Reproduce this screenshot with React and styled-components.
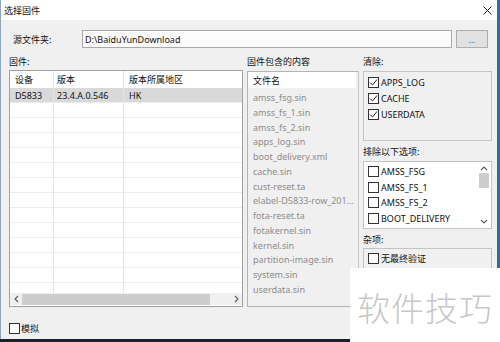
import React from 'react';
import styled, { createGlobalStyle } from 'styled-components';

const GlobalStyle = createGlobalStyle`
  html, body { margin: 0; padding: 0; }
  body {
    width: 500px; height: 342px; overflow: hidden;
    font-family: "Noto Sans", "Noto Sans CJK SC", sans-serif;
  }
`;

const Screen = styled.div`
  position: relative;
  width: 500px;
  height: 342px;
  background: #2f6ca8;
  display: flex;
  flex-direction: column;
  overflow: hidden;
  font-size: 9px;
  color: #111;
`;

const Window = styled.div`
  width: 497px;
  height: 339px;
  box-sizing: border-box;
  border-left: 1px solid #8fa6bf;
  background: #f0f0f0;
  display: flex;
  flex-direction: column;
`;

const Taskbar = styled.div`
  height: 3px;
  background: #18222f;
`;

const TitleBar = styled.div`
  height: 20px;
  background: #fff;
  display: flex;
  align-items: center;
  justify-content: space-between;
  padding: 0 5px 0 3px;
  font-family: "Noto Sans CJK SC", sans-serif;
`;

const Body = styled.div`
  display: flex;
  flex-direction: column;
  padding: 0 5px 0 8px;
`;

const SourceRow = styled.div`
  display: flex;
  align-items: center;
  margin-top: 10px;
  height: 18px;
`;

const SourceLabel = styled.div`
  width: 69px;
  padding-left: 4px;
  font-family: "Noto Sans CJK SC", sans-serif;
`;

const PathInput = styled.div`
  width: 370px;
  height: 18px;
  box-sizing: border-box;
  border: 1px solid #a9a9a9;
  background: #fbfbfb;
  display: flex;
  align-items: center;
  padding-left: 2px;
`;

const BrowseButton = styled.div`
  margin-left: 4px;
  width: 32px;
  height: 18px;
  box-sizing: border-box;
  border: 1px solid #adadad;
  background: #e1e1e1;
  display: flex;
  align-items: center;
  justify-content: center;
  font-size: 8px;
  color: #444;
`;

const Columns = styled.div`
  display: grid;
  grid-template-columns: 234px 112px 129px;
  column-gap: 4px;
  margin-top: 6px;
`;

const Column = styled.div`
  display: flex;
  flex-direction: column;
`;

const GroupLabel = styled.div`
  height: ${p => p.$h || 16}px;
  line-height: ${p => p.$lh || 16}px;
  font-family: "Noto Sans CJK SC", sans-serif;
  white-space: nowrap;
`;

const TableBox = styled.div`
  height: 237px;
  box-sizing: border-box;
  border: 1px solid #a0a0a0;
  background: #fff;
  display: flex;
  flex-direction: column;
`;

const TableBody = styled.div`
  flex: 1;
  overflow: hidden;
`;

const TRow = styled.div`
  display: grid;
  grid-template-columns: 44px 70px 1fr;
  height: ${p => (p.$head ? 17 : 15)}px;
  box-sizing: border-box;
  background: ${p => (p.$selected ? '#d9d9d9' : '#fff')};
  border-bottom: ${p => (p.$head ? 'none' : '1px solid #ececec')};
`;

const TCell = styled.div`
  border-right: 1px solid #e6e6e6;
  padding-left: ${p => p.$pl || 4}px;
  display: flex;
  align-items: center;
  white-space: nowrap;
  overflow: hidden;
  font-family: "Noto Sans", "Noto Sans CJK SC", sans-serif;
  &:last-child { border-right: none; }
`;

const HScroll = styled.div`
  height: 12px;
  display: flex;
  align-items: center;
  background: #f0f0f0;
  margin-bottom: 1px;
`;

const ScrollArrow = styled.div`
  width: ${p => p.$w || 12}px;
  height: ${p => p.$h || 12}px;
  display: flex;
  align-items: center;
  justify-content: center;
  flex-shrink: 0;
`;

const HThumb = styled.div`
  flex: 1;
  height: 11px;
  background: #cdcdcd;
  margin: 0 20px 0 0;
`;

const BottomRow = styled.div`
  display: flex;
  align-items: center;
  gap: 1px;
  margin-top: 15px;
  height: 12px;
  font-family: "Noto Sans CJK SC", sans-serif;
`;

const ListBox = styled.div`
  height: 236px;
  box-sizing: border-box;
  border: 1px solid #b4b4b4;
  border-right-color: #c8c8c8;
  background: #f0f0f0;
  overflow: hidden;
`;

const ListHead = styled.div`
  height: 16px;
  background: #fff;
  display: flex;
  align-items: center;
  padding-left: 5px;
  font-family: "Noto Sans CJK SC", sans-serif;
  margin-right: 2px;
`;

const ListItems = styled.div`
  padding-top: 3px;
`;

const ListItem = styled.div`
  height: 14.75px;
  line-height: 14.75px;
  padding-left: 5px;
  color: #8c8c8c;
  white-space: nowrap;
`;

const OptionBox = styled.div`
  height: ${p => p.$h}px;
  box-sizing: border-box;
  border: 1px solid #c4c4c4;
  background: ${p => (p.$white ? '#fff' : '#f0f0f0')};
  padding: ${p => p.$pt || 2}px 0 0 4px;
  display: flex;
  position: relative;
`;

const OptionList = styled.div`
  flex: 1;
  display: flex;
  flex-direction: column;
`;

const OptionRow = styled.div`
  height: ${p => p.$h || 16}px;
  display: flex;
  align-items: center;
  gap: 2px;
  white-space: nowrap;
  font-family: "Noto Sans", "Noto Sans CJK SC", sans-serif;
`;

const Box = styled.span`
  width: 11px;
  height: 11px;
  box-sizing: border-box;
  border: 1px solid #333;
  background: #fff;
  display: inline-flex;
  align-items: center;
  justify-content: center;
  flex-shrink: 0;
`;

const VScroll = styled.div`
  width: 11px;
  margin: -1px 2px 2px 0;
  display: flex;
  flex-direction: column;
  align-items: center;
`;

const VThumb = styled.div`
  width: 10px;
  height: 15px;
  background: #cdcdcd;
`;

const VSpacer = styled.div`
  flex: 1;
`;

const Watermark = styled.div`
  position: absolute;
  right: 0;
  bottom: 0;
  width: 150px;
  height: 74px;
  background: #fff;
  display: flex;
  align-items: center;
  justify-content: center;
  padding-top: 4px;
  box-sizing: border-box;
  font-family: "Noto Sans CJK SC", sans-serif;
  font-size: 33px;
  font-weight: 300;
  color: #c8c8c8;
  letter-spacing: 1px;
`;

const Check = ({ checked }) => (
  <Box>
    {checked && (
      <svg width="9" height="9" viewBox="0 0 9 9">
        <polyline points="1,4.5 3.5,7 8,1.5" fill="none" stroke="#222" strokeWidth="1" />
      </svg>
    )}
  </Box>
);

const Chevron = ({ dir }) => {
  const pts = {
    left: '4,1 1,4 4,7',
    right: '1,1 4,4 1,7',
    up: '1,4 4,1 7,4',
    down: '1,1 4,4 7,1',
  }[dir];
  const horiz = dir === 'left' || dir === 'right';
  return (
    <svg width={horiz ? 5 : 8} height={horiz ? 8 : 5} viewBox={horiz ? '0 0 5 8' : '0 0 8 5'}>
      <polyline points={pts} fill="none" stroke="#606060" strokeWidth="1.2" />
    </svg>
  );
};

const files = [
  'amss_fsg.sin', 'amss_fs_1.sin', 'amss_fs_2.sin', 'apps_log.sin', 'boot_delivery.xml',
  'cache.sin', 'cust-reset.ta', 'elabel-D5833-row_201...', 'fota-reset.ta', 'fotakernel.sin',
  'kernel.sin', 'partition-image.sin', 'system.sin', 'userdata.sin',
];

const emptyRows = Array.from({ length: 13 });

export default function App() {
  return (
    <>
      <GlobalStyle />
      <Screen>
        <Window>
          <TitleBar>
            <span>选择固件</span>
            <svg width="9" height="9" viewBox="0 0 9 9">
              <path d="M0.5 0.5 L8.5 8.5 M8.5 0.5 L0.5 8.5" stroke="#222" strokeWidth="1" />
            </svg>
          </TitleBar>
          <Body>
            <SourceRow>
              <SourceLabel>源文件夹:</SourceLabel>
              <PathInput>D:\BaiduYunDownload</PathInput>
              <BrowseButton>...</BrowseButton>
            </SourceRow>
            <Columns>
              <Column>
                <GroupLabel>固件:</GroupLabel>
                <TableBox>
                  <TableBody>
                    <TRow $head>
                      <TCell $pl={5}>设备</TCell>
                      <TCell $pl={3}>版本</TCell>
                      <TCell $pl={5}>版本所属地区</TCell>
                    </TRow>
                    <TRow $selected>
                      <TCell $pl={5}>D5833</TCell>
                      <TCell $pl={3}>23.4.A.0.546</TCell>
                      <TCell $pl={5}>HK</TCell>
                    </TRow>
                    {emptyRows.map((_, i) => (
                      <TRow key={i}>
                        <TCell />
                        <TCell />
                        <TCell />
                      </TRow>
                    ))}
                  </TableBody>
                  <HScroll>
                    <ScrollArrow><Chevron dir="left" /></ScrollArrow>
                    <HThumb />
                    <ScrollArrow><Chevron dir="right" /></ScrollArrow>
                  </HScroll>
                </TableBox>
                <BottomRow>
                  <Check />
                  <span>模拟</span>
                </BottomRow>
              </Column>
              <Column>
                <GroupLabel $h={17}>固件包含的内容</GroupLabel>
                <ListBox>
                  <ListHead>文件名</ListHead>
                  <ListItems>
                    {files.map(f => <ListItem key={f}>{f}</ListItem>)}
                  </ListItems>
                </ListBox>
              </Column>
              <Column>
                <GroupLabel $h={17}>清除:</GroupLabel>
                <OptionBox $h={70}>
                  <OptionList>
                    <OptionRow><Check checked />APPS_LOG</OptionRow>
                    <OptionRow><Check checked />CACHE</OptionRow>
                    <OptionRow><Check checked />USERDATA</OptionRow>
                  </OptionList>
                </OptionBox>
                <GroupLabel $h={20} $lh={22}>排除以下选项:</GroupLabel>
                <OptionBox $h={68} $white $pt={2}>
                  <OptionList>
                    <OptionRow $h={15.5}><Check />AMSS_FSG</OptionRow>
                    <OptionRow $h={15.5}><Check />AMSS_FS_1</OptionRow>
                    <OptionRow $h={15.5}><Check />AMSS_FS_2</OptionRow>
                    <OptionRow $h={15.5}><Check />BOOT_DELIVERY</OptionRow>
                  </OptionList>
                  <VScroll>
                    <ScrollArrow $w={11} $h={10}><Chevron dir="up" /></ScrollArrow>
                    <VThumb />
                    <VSpacer />
                    <ScrollArrow $w={11} $h={10}><Chevron dir="down" /></ScrollArrow>
                  </VScroll>
                </OptionBox>
                <GroupLabel $h={19} $lh={22}>杂项:</GroupLabel>
                <OptionBox $h={59} $pt={1}>
                  <OptionList>
                    <OptionRow><Check /><span style={{ fontFamily: '"Noto Sans CJK SC", sans-serif' }}>无最终验证</span></OptionRow>
                  </OptionList>
                </OptionBox>
              </Column>
            </Columns>
          </Body>
        </Window>
        <Taskbar />
        <Watermark>软件技巧</Watermark>
      </Screen>
    </>
  );
}
